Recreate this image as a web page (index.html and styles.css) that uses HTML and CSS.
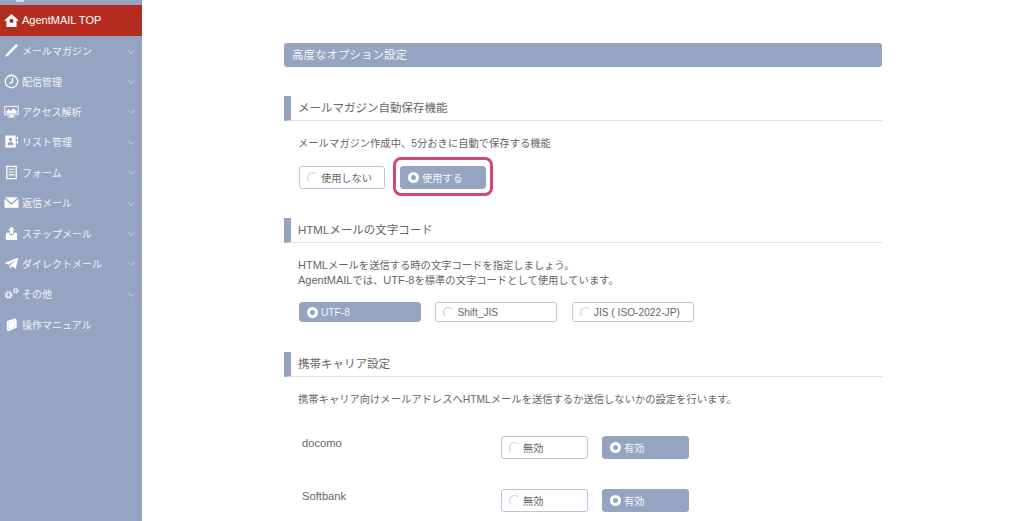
FILE: index.html
```html
<!DOCTYPE html>
<html lang="ja">
<head>
<meta charset="utf-8">
<title>高度なオプション設定</title>
<link rel="stylesheet" href="styles.css">
</head>
<body>
<div class="app">
  <nav class="side">
    <div class="stub"></div>
    <a class="item active"><svg class="ic" viewBox="0 0 16 16"><path fill="#fff" d="M8 1 0.5 7.6 1.6 8.8 2.6 8V15H13.4V8L14.4 8.8 15.5 7.6ZM8 6.2A2.2 2.2 0 1 1 8 10.6 2.2 2.2 0 0 1 8 6.2Z"/></svg><span>AgentMAIL TOP</span></a>
    <a class="item"><svg class="ic" viewBox="0 0 16 16"><path fill="#fff" d="M13 1 15 3 4.6 13.4 1 15 2.6 11.4Z"/></svg><span>メールマガジン</span><i class="chev"></i></a>
    <a class="item"><svg class="ic" viewBox="0 0 16 16"><circle cx="8" cy="8" r="6.6" fill="none" stroke="#fff" stroke-width="1.5"/><path fill="none" stroke="#fff" stroke-width="1.4" d="M9 3.8V8.6L5.6 10"/></svg><span>配信管理</span><i class="chev"></i></a>
    <a class="item"><svg class="ic" viewBox="0 0 16 16"><path fill="none" stroke="#fff" d="M.8 2.5H15.2V11.5H.8Z"/><path fill="#fff" d="M2.5 10V8L5 5.5 7 7.5 10 4.5 13.5 7.5V10ZM6 12H10V13.5H12V14.5H4V13.5H6Z"/></svg><span>アクセス解析</span><i class="chev"></i></a>
    <a class="item"><svg class="ic" viewBox="0 0 16 16"><path fill="#fff" fill-rule="evenodd" d="M1.5 1.5H12.5V14.5H1.5ZM7 4A1.9 1.9 0 1 0 7 7.8 1.9 1.9 0 0 0 7 4ZM3.8 12H10.2V10.6C10.2 9.2 8.8 8.5 7 8.5S3.8 9.2 3.8 10.6Z"/><path fill="#fff" d="M13.5 3H15V6H13.5ZM13.5 7.5H15V10.5H13.5Z"/></svg><span>リスト管理</span><i class="chev"></i></a>
    <a class="item"><svg class="ic" viewBox="0 0 16 16"><path fill="none" stroke="#fff" stroke-width="1.4" d="M3 1.5H13V14.5H3Z"/><path stroke="#fff" stroke-width="1.2" d="M5 4.5H11M5 7.5H11M5 10.5H11"/></svg><span>フォーム</span><i class="chev"></i></a>
    <a class="item"><svg class="ic" viewBox="0 0 16 16"><path fill="#fff" d="M1 2.5H15L8 8.5ZM.5 4 8 10.4 15.5 4V13.5H.5Z"/></svg><span>返信メール</span><i class="chev"></i></a>
    <a class="item"><svg class="ic" viewBox="0 0 16 16"><path fill="#fff" d="M8 .5 11.5 4.5H9.8V8.5H6.2V4.5H4.5ZM2 8 5 6.5V8L8 10.5 11 8V6.5L14 8V15H2Z"/></svg><span>ステップメール</span><i class="chev"></i></a>
    <a class="item"><svg class="ic" viewBox="0 0 16 16"><path fill="#fff" d="M15.5 1.5 12.5 13.5 8.5 10.8 6.2 13.5V10L13 3.8 4.8 9.2.5 7.5Z"/></svg><span>ダイレクトメール</span><i class="chev"></i></a>
    <a class="item"><svg class="ic" viewBox="0 0 16 16"><circle cx="5" cy="9.5" r="2.8" fill="none" stroke="#fff" stroke-width="2.4" stroke-dasharray="1.6 .6"/><circle cx="12.5" cy="5" r="2" fill="none" stroke="#fff" stroke-width="1.8" stroke-dasharray="1.2 .5"/></svg><span>その他</span><i class="chev"></i></a>
    <a class="item"><svg class="ic" viewBox="0 0 16 16"><path fill="#fff" d="M3 4.5 12.5 1V3L13.5 2.6V11.5L5 15 3 14ZM5 6V13L11.5 10.3V3.4Z"/><path fill="#fff" d="M5 6 11.5 3.4V10.3L5 13Z"/></svg><span>操作マニュアル</span></a>
  </nav>
  <main class="main">
    <h2 class="title">高度なオプション設定</h2>

    <section class="sec s1">
      <h3 class="head">メールマガジン自動保存機能</h3>
      <p class="desc">メールマガジン作成中、5分おきに自動で保存する機能</p>
      <div class="opts wide-gap">
        <label class="radio r86"><i class="dot"></i>使用しない</label>
        <label class="radio r86 on marked"><i class="dot"></i>使用する</label>
      </div>
    </section>

    <section class="sec s2">
      <h3 class="head">HTMLメールの文字コード</h3>
      <p class="desc"><span class="lat">HTML</span>メールを送信する時の文字コードを指定しましょう。<br><span class="lat">AgentMAIL</span>では、<span class="lat">UTF-8</span>を標準の文字コードとして使用しています。</p>
      <div class="opts">
        <label class="radio r122 on"><i class="dot"></i>UTF-8</label>
        <label class="radio r122"><i class="dot"></i>Shift_JIS</label>
        <label class="radio r122"><i class="dot"></i>JIS ( ISO-2022-JP)</label>
      </div>
    </section>

    <section class="sec s3">
      <h3 class="head">携帯キャリア設定</h3>
      <p class="desc">携帯キャリア向けメールアドレスへHTMLメールを送信するか送信しないかの設定を行います。</p>
      <div class="row r-first">
        <span class="carrier">docomo</span>
        <div class="opts">
          <label class="radio r87"><i class="dot"></i>無効</label>
          <label class="radio r87 on"><i class="dot"></i>有効</label>
        </div>
      </div>
      <div class="row">
        <span class="carrier">Softbank</span>
        <div class="opts">
          <label class="radio r87"><i class="dot"></i>無効</label>
          <label class="radio r87 on"><i class="dot"></i>有効</label>
        </div>
      </div>
    </section>
  </main>
</div>
</body>
</html>
```
FILE: styles.css
```css
* { box-sizing: border-box; }
html, body { margin: 0; height: 100%; overflow: hidden; background: #fff; }
body { font-family: "Liberation Sans", "Noto Sans CJK JP", sans-serif; color: #666; }
.app { display: flex; height: 521px; overflow: hidden; }

.side { width: 142px; flex: none; background: #95a5c1; }
.stub { width: 8px; height: 2px; margin: 0 0 3px 16px; background: #d5dbe7; }
.item { display: flex; align-items: center; height: 30.4px; padding-left: 4px; color: #f1f3f7; font-size: 10px; position: relative; }
.item.active { height: 30.6px; background: #b52d20; color: #fff; font-size: 11px; }
.item span { margin-left: 3px; }
.ic { width: 15px; height: 15px; flex: none; }
.chev { position: absolute; right: 8px; top: 12px; width: 5px; height: 5px; border-right: 1px solid #b9c4d8; border-bottom: 1px solid #b9c4d8; transform: rotate(45deg); }

.main { flex: none; width: 598px; margin-left: 142px; padding-top: 43px; }
.title { margin: 0; height: 24px; line-height: 24px; padding-left: 8px; background: #95a5c1; border-radius: 3px; color: #f4f6f9; font-size: 11.5px; font-weight: 400; }
.head { margin: 0; height: 25px; line-height: 24px; padding-left: 7px; border-left: 7px solid #95a5c1; border-bottom: 1px solid #dfe2e8; font-size: 11.5px; font-weight: 400; color: #666; }
.desc { margin: 15px 0 0 14px; font-size: 10.3px; line-height: 15px; color: #666; }
.lat { font-size: 11px; }
.s1 { margin-top: 29px; }
.s2 { margin-top: 29px; }
.s3 { margin-top: 30px; }

.opts { display: flex; gap: 14px; margin-left: 15px; }
.wide-gap { gap: 15px; margin-top: 15px; }
.s2 .opts { margin-top: 14px; gap: 14.4px; }
.radio { display: flex; align-items: center; height: 23px; padding-left: 7px; border: 1px solid #b9c5da; border-radius: 3px; background: #fff; font-size: 10.2px; color: #666; position: relative; }
.s2 .radio { height: 20px; }
.r86 { width: 86px; }
.r122 { width: 122px; }
.r87 { width: 87px; }
.dot { width: 11px; height: 11px; margin-right: 3px; border-radius: 50%; border: 1px solid transparent; border-left-color: #c6cfdf; border-top-color: #c6cfdf; flex: none; }
.radio.on { background: #95a5c1; border-color: #95a5c1; color: #f4f6f9; }
.radio.on .dot { background: #95a5c1; border: 3px solid #fff; }
.marked::after { content: ""; position: absolute; inset: -10px -8px -8px -8px; border: 3px solid #d3477a; border-radius: 8px; }

.row { display: flex; align-items: flex-start; height: 53px; }
.r-first { margin-top: 29px; }
.carrier { width: 199px; margin-left: 18px; font-size: 11.2px; line-height: 14px; flex: none; }
.row .opts { margin-left: 0; }
```
